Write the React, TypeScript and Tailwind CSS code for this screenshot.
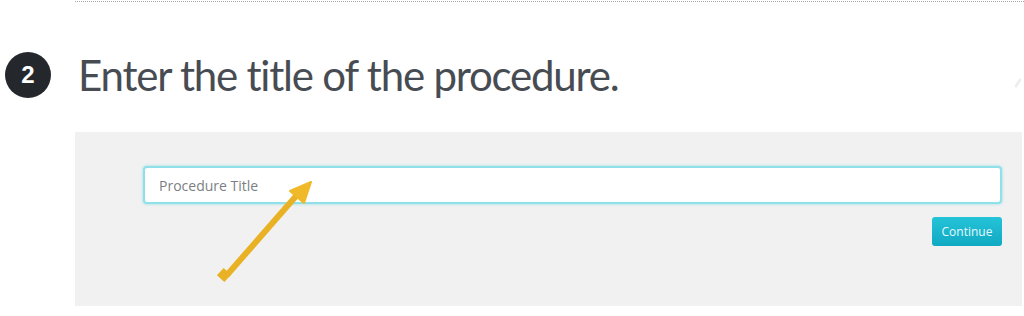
import React from "react";

export default function App() {
  return (
    <div className="relative w-[1024px] h-[316px] overflow-hidden bg-white font-['Lato',sans-serif]">
      <div className="pt-px">
        <div className="ml-[75px] border-t border-dotted border-[#a8a8a8]" />
      </div>
      <div className="mt-[50px] flex h-[46px] items-center">
        <div className="ml-[5px] flex h-[46px] w-[46px] items-center justify-center rounded-full bg-[#24282c] text-[24px] font-bold text-white font-['Liberation_Sans',sans-serif]">
          2
        </div>
        <h1 className="ml-[27px] text-[42px] leading-none tracking-[-1.2px] text-[#474c53] [font-variant-ligatures:none]">
          Enter the title of the procedure.
        </h1>
      </div>
      <div className="ml-[75px] mt-[34px] h-[174px] w-[947px] bg-[#f1f1f1] pl-[68px] pt-[34px]">
        <div className="flex w-[859px] flex-col items-end">
          <div className="flex h-[38px] w-full items-center rounded-[4px] border-2 border-[#8fe0e9] bg-white pl-[14px] shadow-[0_0_3px_rgba(80,210,225,0.6)]">
            <span className="font-['Open_Sans',sans-serif] text-[14px] text-[#7b7f84]">Procedure Title</span>
          </div>
          <button className="mt-[13px] flex h-[29px] w-[70px] items-center justify-center rounded-[3px] bg-gradient-to-b from-[#24c3d8] to-[#0fa9c3] font-['Open_Sans',sans-serif] text-[12px] text-[#e6f9fc]">
            Continue
          </button>
        </div>
      </div>
      <svg className="absolute left-0 top-0" width="1024" height="316" viewBox="0 0 1024 316">
        <line x1="227" y1="275" x2="297" y2="195" stroke="#e9b124" strokeWidth="6" strokeLinecap="butt" />
        <rect x="219" y="270" width="10" height="10" fill="#e9b124" transform="rotate(42 224 275)" />
        <polygon points="311,182 290,191 304,203" fill="#f0b92a" stroke="#f0b92a" strokeWidth="2" strokeLinejoin="round" />
        <path d="M1020 80 L1016 86" stroke="#eceef0" strokeWidth="3" strokeLinecap="round" />
      </svg>
    </div>
  );
}
